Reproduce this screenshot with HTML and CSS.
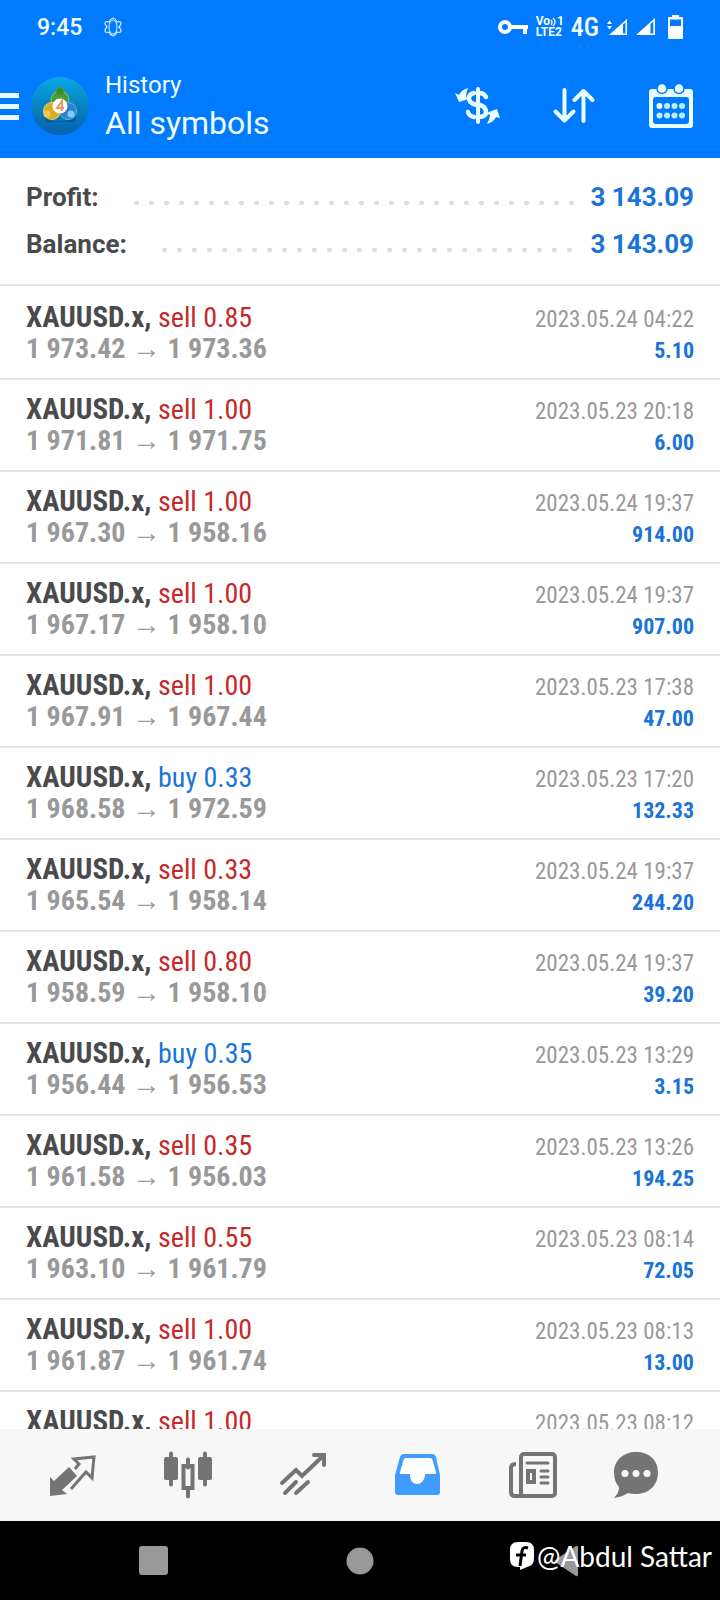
FILE: index.html
```html
<!DOCTYPE html>
<html lang="en">
<head>
<meta charset="utf-8">
<meta name="viewport" content="width=device-width, initial-scale=1">
<title>History</title>
<link rel="stylesheet" href="styles.css">
</head>
<body>
<div class="app">
  <div class="status">
    <span class="clock">9:45</span>
    <svg class="atom" width="18" height="20" viewBox="0 0 18 20" fill="none" stroke="#d8f4ff" stroke-width="1.200"><path d="M9 1q3 1 4 4 4-1 4 1 0 2-2 4 2 2 2 4 0 2-4 1-1 3-4 4-3-1-4-4-4 1-4-1 0-2 2-4-2-2-2-4 0-2 4-1 1-3 4-4z"/><ellipse cx="9" cy="10" rx="4" ry="7" stroke-width="1"/></svg>
    <div class="status-icons">
      <svg width="30" height="16" viewBox="0 0 30 16"><circle cx="7" cy="8" r="5" fill="none" stroke="#fff" stroke-width="4"/><path d="M12 6h18v4h-1v5h-4v-5H12z" fill="#fff"/></svg>
      <span class="volte"><span>Vo<svg width="7" height="10" viewBox="0 0 7 10" fill="none" stroke="#fff" stroke-width="1.300"><path d="M1 3q2 2 0 5M3 1q4 4 0 8"/></svg>1</span><span>LTE2</span></span>
      <span class="net">4G</span>
      <svg width="21" height="18" viewBox="0 0 21 18"><path d="M2 17 20 1v16z" fill="#fff"/><path d="M16 6.500l2.500-2v11H16z" fill="#007aff"/><path d="M0 6l2.500-3.500L5 6zM0 8h5l-2.500 3.500z" fill="#fff"/></svg>
      <svg width="19" height="18" viewBox="0 0 19 18"><path d="M0 17 19 0v17z" fill="#fff"/><path d="M14.500 6l2.800-2.500v12h-2.800z" fill="#007aff"/></svg>
      <svg class="battery" width="15" height="24" viewBox="0 0 15 24"><path d="M4 0h7v2h3a1 1 0 0 1 1 1v20a1 1 0 0 1-1 1H1a1 1 0 0 1-1-1V3a1 1 0 0 1 1-1h3z" fill="#fff"/><path d="M2 4.500h11V11H2z" fill="#007aff"/></svg>
    </div>
  </div>

  <header class="header">
    <button class="icon-btn menu" aria-label="Menu"><svg width="19" height="27" viewBox="0 0 19 27" fill="#e8fcff"><path d="M0 0h19v5H0zM0 11h19v5H0zM0 22h19v5H0z"/></svg></button>
    <svg class="avatar" width="58" height="58" viewBox="0 0 58 58">
      <defs><linearGradient id="sea" x1="0" y1="0" x2="0" y2="1"><stop offset="0" stop-color="#08a9e6"/><stop offset=".55" stop-color="#0780bd"/><stop offset="1" stop-color="#0760ae"/></linearGradient></defs>
      <circle cx="29" cy="29" r="29" fill="url(#sea)"/>
      <path d="M12 40q14 9 34 0l-3 5H16z" fill="#045083" opacity=".6"/>
      <circle cx="29" cy="23" r="9" fill="#4b9d35" stroke="#8cc36a"/>
      <circle cx="21" cy="34" r="8.500" fill="#d9ad22" stroke="#ecd06a"/>
      <circle cx="37" cy="34" r="8.500" fill="#2c82cd" stroke="#69b0e2"/>
      <circle cx="29" cy="14.500" r="4" fill="#328c2c" stroke="#4f9d3f"/>
      <circle cx="16" cy="37" r="3.500" fill="#f1cf55"/>
      <circle cx="40" cy="37" r="3.500" fill="#86c9f2"/>
      <circle cx="29" cy="29" r="7.500" fill="#fff"/>
      <path d="M31 34V24l-5 7h7" fill="none" stroke="#ee985d" stroke-width="2"/>
    </svg>
    <div class="titles">
      <span class="subtitle">History</span>
      <h1 class="title">All symbols</h1>
    </div>
    <div class="actions">
      <button class="icon-btn" aria-label="Symbols"><svg width="48" height="48" viewBox="0 0 48 48" fill="none" stroke="#eaffff" stroke-linecap="round"><path d="M25 7v33" stroke-width="4"/><path d="M33 15q-2-4-7-4M21 11q-5 1-5 5.500 0 4 6 6M27 23q6 2 6 7t-7 5M15 30q1 4 6 5" stroke-width="4.500"/><path d="M15 6Q8 8 6 13l-4-2 4 9 10-3-3-2q0-4 2-9zM34 42q7-2 9-7l4 1-3-9-11 4 4 2q0 4-3 9z" fill="#eaffff" stroke="none"/></svg></button>
      <button class="icon-btn" aria-label="Sort"><svg width="48" height="48" viewBox="0 0 48 48" fill="none" stroke="#eaffff" stroke-width="4" stroke-linecap="round" stroke-linejoin="round"><path d="M14.500 8v30M5.500 29.500l9 9 9-9M33.500 39V9M24.500 18l9-9 9 9"/></svg></button>
      <button class="icon-btn" aria-label="Calendar"><svg width="48" height="48" viewBox="0 0 48 48"><rect x="2" y="7" width="44" height="39" rx="3" fill="#eaffff"/><rect x="6" y="15" width="36" height="27" rx="3" fill="#007aff"/><g fill="#eaffff" stroke="#007aff" stroke-width="1.500"><circle cx="15" cy="6.500" r="5"/><circle cx="32" cy="6.500" r="5"/></g><g fill="#bdeeff"><circle cx="12.500" cy="24" r="3" fill="#fff"/><circle cx="20" cy="24" r="3"/><circle cx="27.500" cy="24" r="3"/><circle cx="35" cy="24" r="3"/><circle cx="12.500" cy="33.500" r="3"/><circle cx="20" cy="33.500" r="3"/><circle cx="27.500" cy="33.500" r="3"/><circle cx="35" cy="33.500" r="3"/></g></svg></button>
    </div>
  </header>

  <section class="summary">
    <div class="sum-row"><span>Profit:</span><span class="dots"></span><span class="sum-value">3 143.09</span></div>
    <div class="sum-row"><span>Balance:</span><span class="dots"></span><span class="sum-value">3 143.09</span></div>
  </section>

  <main class="deals">
    <article class="deal"><div class="line"><span class="symbol">XAUUSD.x, <span class="sell">sell 0.85</span></span><time>2023.05.24 04:22</time></div><div class="line"><span class="price">1 973.42 <i>→</i> 1 973.36</span><span class="profit">5.10</span></div></article>
    <article class="deal"><div class="line"><span class="symbol">XAUUSD.x, <span class="sell">sell 1.00</span></span><time>2023.05.23 20:18</time></div><div class="line"><span class="price">1 971.81 <i>→</i> 1 971.75</span><span class="profit">6.00</span></div></article>
    <article class="deal"><div class="line"><span class="symbol">XAUUSD.x, <span class="sell">sell 1.00</span></span><time>2023.05.24 19:37</time></div><div class="line"><span class="price">1 967.30 <i>→</i> 1 958.16</span><span class="profit">914.00</span></div></article>
    <article class="deal"><div class="line"><span class="symbol">XAUUSD.x, <span class="sell">sell 1.00</span></span><time>2023.05.24 19:37</time></div><div class="line"><span class="price">1 967.17 <i>→</i> 1 958.10</span><span class="profit">907.00</span></div></article>
    <article class="deal"><div class="line"><span class="symbol">XAUUSD.x, <span class="sell">sell 1.00</span></span><time>2023.05.23 17:38</time></div><div class="line"><span class="price">1 967.91 <i>→</i> 1 967.44</span><span class="profit">47.00</span></div></article>
    <article class="deal"><div class="line"><span class="symbol">XAUUSD.x, <span class="buy">buy 0.33</span></span><time>2023.05.23 17:20</time></div><div class="line"><span class="price">1 968.58 <i>→</i> 1 972.59</span><span class="profit">132.33</span></div></article>
    <article class="deal"><div class="line"><span class="symbol">XAUUSD.x, <span class="sell">sell 0.33</span></span><time>2023.05.24 19:37</time></div><div class="line"><span class="price">1 965.54 <i>→</i> 1 958.14</span><span class="profit">244.20</span></div></article>
    <article class="deal"><div class="line"><span class="symbol">XAUUSD.x, <span class="sell">sell 0.80</span></span><time>2023.05.24 19:37</time></div><div class="line"><span class="price">1 958.59 <i>→</i> 1 958.10</span><span class="profit">39.20</span></div></article>
    <article class="deal"><div class="line"><span class="symbol">XAUUSD.x, <span class="buy">buy 0.35</span></span><time>2023.05.23 13:29</time></div><div class="line"><span class="price">1 956.44 <i>→</i> 1 956.53</span><span class="profit">3.15</span></div></article>
    <article class="deal"><div class="line"><span class="symbol">XAUUSD.x, <span class="sell">sell 0.35</span></span><time>2023.05.23 13:26</time></div><div class="line"><span class="price">1 961.58 <i>→</i> 1 956.03</span><span class="profit">194.25</span></div></article>
    <article class="deal"><div class="line"><span class="symbol">XAUUSD.x, <span class="sell">sell 0.55</span></span><time>2023.05.23 08:14</time></div><div class="line"><span class="price">1 963.10 <i>→</i> 1 961.79</span><span class="profit">72.05</span></div></article>
    <article class="deal"><div class="line"><span class="symbol">XAUUSD.x, <span class="sell">sell 1.00</span></span><time>2023.05.23 08:13</time></div><div class="line"><span class="price">1 961.87 <i>→</i> 1 961.74</span><span class="profit">13.00</span></div></article>
    <article class="deal"><div class="line"><span class="symbol">XAUUSD.x, <span class="sell">sell 1.00</span></span><time>2023.05.23 08:12</time></div></article>
  </main>

  <nav class="tabs">
    <button class="tab" aria-label="Quotes"><svg width="48" height="48" viewBox="0 0 48 48"><path d="M1 26l4 4 15-14 8 9-15 14 5 4-17 2z" fill="#747474"/><path d="M26 18l4-5-5-5 20-2-2 21-6-6-15 17" fill="none" stroke="#747474" stroke-width="3"/></svg></button>
    <button class="tab" aria-label="Charts"><svg width="48" height="48" viewBox="0 0 48 48" fill="#747474"><rect y="6" width="14" height="23" rx="2"/><rect x="34" y="6" width="14" height="23" rx="2"/><path d="M7 2.500v31M41 2.500v31M24 8.500v8M24 37v8.500" stroke="#747474" stroke-width="4" stroke-linecap="round"/><rect x="19.500" y="15" width="9" height="22" fill="none" stroke="#747474" stroke-width="4"/></svg></button>
    <button class="tab" aria-label="Trade"><svg width="48" height="48" viewBox="0 0 48 48" fill="none" stroke="#747474" stroke-width="4" stroke-linecap="round"><path d="M3 32l14-13 6 6L44 5M35 4h10v10M6 42l11-11M17 42l12-11"/></svg></button>
    <button class="tab" aria-label="History" aria-current="page"><svg width="48" height="48" viewBox="0 0 48 48"><path d="M10 3h28q3 0 4 3l4 18v17q0 3-3 3H4q-3 0-3-3V24L6 6q1-3 4-3z" fill="#409cff"/><path d="M12 7h24q2 0 2.500 2L42 21q.5 2-1 2H31v2q-2 8-8 8t-7-8v-2H7q-2 0-1-2L9.500 9q.5-2 2.500-2z" fill="#fff"/></svg></button>
    <button class="tab" aria-label="News"><svg width="48" height="48" viewBox="0 0 48 48" fill="none" stroke="#747474" stroke-width="4"><rect x="12" y="3" width="34" height="42" rx="3"/><path d="M7 13q-5 0-5 4v24q0 4 4 4h9"/><path d="M18 12h21M32 20h7M32 26h7M32 32h7" stroke-width="3" stroke-linecap="round"/><rect x="19" y="20" width="6" height="11"/></svg></button>
    <button class="tab" aria-label="Messages"><svg width="48" height="48" viewBox="0 0 48 48"><path d="M24 1C37 1 46 9 46 21.500S37 43 24 43q-5 0-8-1-6 4-14 5 5-5 5-11-5-5.500-5-14.500C2 9 12 1 24 1z" fill="#747474"/><g fill="#f7f7f7"><circle cx="13" cy="22.500" r="3.500"/><circle cx="24" cy="22.500" r="3.500"/><circle cx="35" cy="22.500" r="3.500"/></g></svg></button>
  </nav>

  <div class="system">
    <button class="icon-btn" aria-label="Recents"><svg width="30" height="32" viewBox="0 0 30 32"><rect x="1" y="1" width="29" height="29" rx="3" fill="#999"/></svg></button>
    <button class="icon-btn" aria-label="Home"><svg width="30" height="32" viewBox="0 0 30 32"><circle cx="15" cy="16" r="13.500" fill="#999"/></svg></button>
    <button class="icon-btn" aria-label="Back"><svg width="30" height="32" viewBox="0 0 30 32"><path d="M3 15 24 1q2-1 2 1v27q0 3-2 2L3 17q-1-1 0-2z" fill="#999"/></svg></button>
    <div class="credit">
      <svg width="26" height="28" viewBox="0 0 26 28"><path d="M9 0h8q8 0 8 8v8q0 8-7 9l-7 3v-3H9q-8 0-8-8V8q0-8 8-8z" fill="#fff"/><path d="M19 6q-5-2-6 3l-2 15M7 13h10" fill="none" stroke="#000" stroke-width="3"/></svg>
      <span>@Abdul Sattar</span>
    </div>
  </div>
</div>
</body>
</html>
```
FILE: styles.css
```css
* { box-sizing: border-box; }
body { margin: 0; font-family: Roboto, "Liberation Sans", sans-serif; background: #fff; }
svg { display: block; flex: none; }
button { padding: 0; border: 0; background: none; }
.app { display: flex; flex-direction: column; height: 100vh; }

.status { display: flex; align-items: center; height: 54px; padding: 0 37px; background: #007aff; color: #f2fdff; }
.clock { font-size: 23px; font-weight: 500; }
.atom { margin-left: 22px; }
.status-icons { display: flex; align-items: center; gap: 8px; margin-left: auto; }
.volte { display: flex; flex-direction: column; width: 27px; font-size: 12px; font-weight: 700; line-height: 11px; }
.volte span { display: flex; align-items: center; }
.net { font-family: "Roboto Condensed", Roboto, sans-serif; font-size: 26px; font-weight: 500; line-height: 28px; }
.battery { margin-left: 5px; }

.header { display: flex; align-items: center; height: 104px; padding-right: 25px; background: #007aff; color: #effdff; }
.icon-btn { display: flex; align-items: center; justify-content: center; }
.avatar { margin-left: 12px; }
.titles { display: flex; flex-direction: column; padding-top: 2px; margin-left: 16px; }
.subtitle { font-size: 24px; line-height: 32px; }
.title { margin: 0; font-size: 32px; font-weight: 400; line-height: 44px; }
.actions { display: flex; gap: 49px; margin-left: auto; }

.summary { padding: 15px 26px 17px; border-bottom: 2px solid #e2e2e2; }
.sum-row { display: flex; align-items: center; height: 47px; font-size: 26px; font-weight: 700; color: #4a4a4c; }
.dots { flex: 1; height: 4px; margin: 12px 10px 0 30px; background: radial-gradient(circle, #dedede 2px, transparent 3px) 0 0 / 15px 4px repeat-x; }
.sum-value { color: #1a73d9; }

.deals { flex: 1; min-height: 0; overflow: hidden; padding-top: 2px; font-family: "Roboto Condensed", Roboto, sans-serif; }
.deal { padding: 13px 26px; border-bottom: 2px solid #e2e2e2; }
.line { display: flex; justify-content: space-between; align-items: baseline; height: 32px; line-height: 32px; white-space: nowrap; }
.symbol { font-size: 29px; font-weight: 700; color: #4a4a4c; }
.sell, .buy { font-size: 28px; font-weight: 400; }
.sell { color: #c62828; }
.buy { color: #1a73d9; }
.price { font-size: 28px; font-weight: 700; color: #999; }
.price i { font-style: normal; font-size: 29px; font-weight: 400; line-height: 1; }
.deal time { font-size: 23px; color: #999; }
.profit { font-size: 22px; font-weight: 700; color: #1a73d9; }

.tabs { display: flex; align-items: center; height: 92px; padding: 0 39px 0 15px; background: #f7f7f7; }
.tab { display: flex; justify-content: center; flex: 115 0 0; }
.tab:last-child { flex-grow: 91; }

.system { position: relative; display: grid; grid-template-columns: repeat(3, 1fr); height: 79px; padding: 0 49px; background: #000; }
.credit { position: absolute; right: 8px; top: 19px; display: flex; align-items: center; gap: 2px; font-family: Lato, sans-serif; font-size: 28px; line-height: 32px; color: #fff; }
```
